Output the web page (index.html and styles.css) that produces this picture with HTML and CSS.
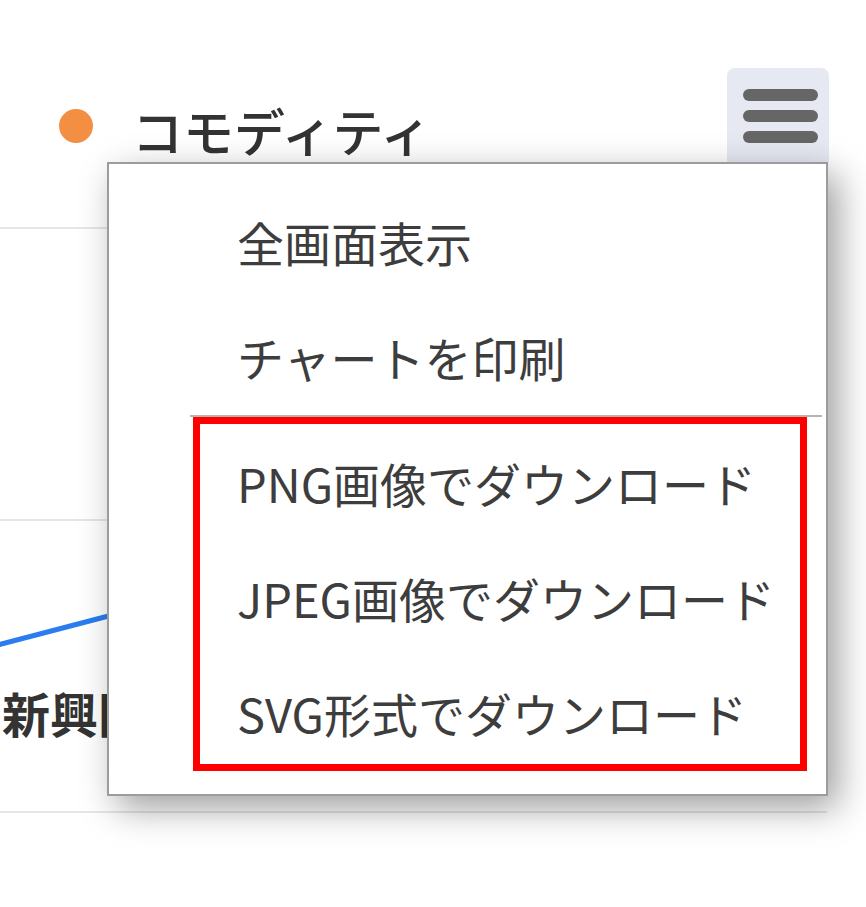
FILE: index.html
```html
<!DOCTYPE html>
<html lang="ja">
<head>
<meta charset="utf-8">
<title>Export menu</title>
<link rel="stylesheet" href="styles.css">
</head>
<body>
<div class="stage">
  <svg class="chart" width="866" height="907" viewBox="0 0 866 907" xmlns="http://www.w3.org/2000/svg">
    <g class="grid">
      <line x1="0" y1="228" x2="827" y2="228"/>
      <line x1="0" y1="520" x2="827" y2="520"/>
      <line x1="0" y1="812" x2="827" y2="812"/>
    </g>
    <polyline class="series" points="-10,647 120,613 700,460"/>
    <circle class="legend-dot" cx="76" cy="126" r="17"/>
    <text class="legend-text" x="132" y="152">コモディティ</text>
    <text class="axis-label" x="2" y="733">新興国</text>
  </svg>

  <button class="export-btn" type="button" aria-label="チャートメニュー">
    <svg width="102" height="100" viewBox="0 0 102 100" xmlns="http://www.w3.org/2000/svg">
      <rect x="16" y="21" width="75" height="12" rx="6"/>
      <rect x="16" y="42" width="75" height="12" rx="6"/>
      <rect x="16" y="63" width="75" height="12" rx="6"/>
    </svg>
  </button>

  <div class="menu">
    <ul class="menu-list">
      <li class="menu-item first">全画面表示</li>
      <li class="menu-item second">チャートを印刷</li>
      <li class="menu-sep"></li>
      <li class="menu-item dl">PNG画像でダウンロード</li>
      <li class="menu-item dl">JPEG画像でダウンロード</li>
      <li class="menu-item dl">SVG形式でダウンロード</li>
    </ul>
  </div>

  <div class="highlight"></div>
</div>
</body>
</html>
```

FILE: styles.css
```css
html, body {
  margin: 0;
  padding: 0;
  background: #ffffff;
}

.stage {
  position: relative;
  width: 866px;
  height: 907px;
  overflow: hidden;
  background: #ffffff;
  font-family: "Noto Sans CJK JP", "Noto Sans", sans-serif;
}

.chart {
  position: absolute;
  left: 0;
  top: 0;
  display: block;
}

.grid line {
  stroke: #e6e6e6;
  stroke-width: 2;
}

.series {
  fill: none;
  stroke: #2a7cf0;
  stroke-width: 5;
  stroke-linecap: round;
}

.legend-dot {
  fill: #f28f43;
}

.legend-text {
  font-family: "Noto Sans CJK JP", sans-serif;
  font-size: 51px;
  font-weight: 500;
  fill: #333333;
}

.axis-label {
  font-family: "Noto Sans CJK JP", sans-serif;
  font-size: 48px;
  font-weight: 700;
  fill: #333333;
}

.export-btn {
  position: absolute;
  left: 727px;
  top: 68px;
  width: 102px;
  height: 100px;
  margin: 0;
  padding: 0;
  border: 0;
  border-radius: 8px;
  background: #e6e9f2;
  display: block;
}

.export-btn svg {
  display: block;
}

.export-btn rect {
  fill: #666666;
}

.menu {
  position: absolute;
  left: 107px;
  top: 162px;
  width: 721px;
  height: 634px;
  box-sizing: border-box;
  border: 2px solid #9c9c9c;
  background: #ffffff;
  box-shadow: 10px 12px 34px rgba(0, 0, 0, 0.38);
}

.menu-list {
  list-style: none;
  margin: 0;
  padding: 21px 0 0 0;
  display: flex;
  flex-direction: column;
}

.menu-item {
  padding-left: 128px;
  font-size: 47px;
  font-weight: 400;
  color: #3d3d3d;
  white-space: nowrap;
}

.menu-item.first {
  height: 113px;
  line-height: 113px;
}

.menu-item.second {
  height: 117px;
  line-height: 117px;
}

.menu-sep {
  height: 2px;
  margin: 0 4px 8px 81px;
  background: #b4b4b4;
}

.menu-item.dl {
  height: 115px;
  line-height: 115px;
}

.highlight {
  position: absolute;
  left: 193px;
  top: 417px;
  width: 614px;
  height: 354px;
  box-sizing: border-box;
  border: 7px solid #ff0000;
  pointer-events: none;
}
```
